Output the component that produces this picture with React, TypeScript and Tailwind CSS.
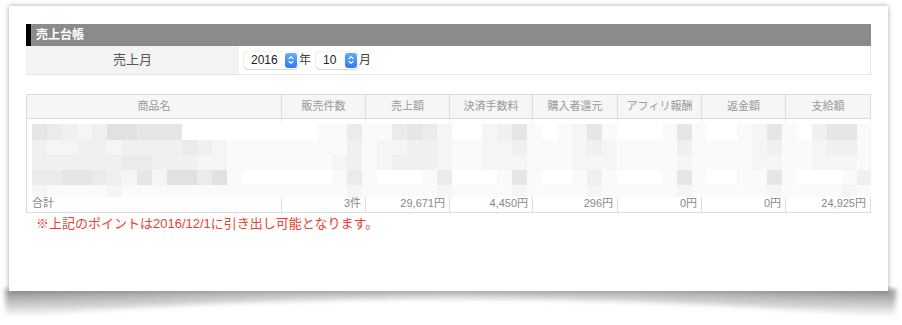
import React from "react";

const SHADES = ["#ffffff", "#fafafa", "#f5f5f5", "#f0f0f0", "#ebebeb", "#e6e6e6", "#e1e1e1"];

const MOSAIC = [
  "5432366555" + "0000000" + "0011" + "4" + "1" + "14542" + "002351" + "012510" + "00151" + "001251" + "03551",
  "3223323333432" + "1111" + "1111" + "3" + "1" + "22332" + "112231" + "112321" + "11131" + "111231" + "12331",
  "3333334433322" + "1111" + "1112" + "3" + "1" + "23332" + "112221" + "112221" + "11121" + "111221" + "12221",
  "4455432526646" + "1000" + "0001" + "4" + "1" + "00014" + "000151" + "001310" + "00151" + "001151" + "00013",
  "2111121111111" + "1111" + "1111" + "2" + "1" + "11112" + "111121" + "111211" + "11121" + "111121" + "11121",
];
const ROW_H = [16, 15, 15, 15, 12];

const COLS = [
  { name: "商品名", w: 255 },
  { name: "販売件数", w: 84 },
  { name: "売上額", w: 84 },
  { name: "決済手数料", w: 83 },
  { name: "購入者還元", w: 85 },
  { name: "アフィリ報酬", w: 84 },
  { name: "返金額", w: 84 },
  { name: "支給額", w: 85 },
];
const TOTALS = ["合計", "3件", "29,671円", "4,450円", "296円", "0円", "0円", "24,925円"];

function Stepper() {
  return (
    <div className="flex h-[15px] w-[12px] items-center justify-center rounded-[3px] bg-gradient-to-b from-[#62acfb] to-[#2d7cf0]">
      <svg width="6" height="10" viewBox="0 0 6 10" fill="none" stroke="white" strokeWidth="1.2" strokeLinecap="round" strokeLinejoin="round">
        <path d="M1 3.6 L3 1.6 L5 3.6" />
        <path d="M1 6.4 L3 8.4 L5 6.4" />
      </svg>
    </div>
  );
}

function Select({ value, w, textW }: { value: string; w: string; textW: string }) {
  return (
    <div className={`flex h-[17px] ${w} items-center justify-between rounded-[4px] bg-white pl-[7px] pr-[1px] shadow-[0_0_1px_rgba(0,0,0,0.45),0_1px_1px_rgba(0,0,0,0.12)]`}>
      <span className={`${textW} text-[12px] leading-none text-[#222]`}>{value}</span>
      <Stepper />
    </div>
  );
}

export default function App() {
  return (
    <div className="relative h-[325px] w-[902px] overflow-hidden bg-white font-['Liberation_Sans','Noto_Sans_CJK_JP',sans-serif]">
      {/* page curl shadow below the card */}
      <svg className="absolute left-0 top-[286px]" width="902" height="39" viewBox="0 0 902 39">
        <defs>
          <linearGradient id="curl" x1="0" y1="0" x2="0" y2="1">
            <stop offset="0" stopColor="#8c8c8c" />
            <stop offset="0.45" stopColor="#bdbdbd" />
            <stop offset="1" stopColor="#ffffff" />
          </linearGradient>
          <linearGradient id="mid" x1="0" y1="0" x2="1" y2="0">
            <stop offset="0" stopColor="#ffffff" stopOpacity="0" />
            <stop offset="0.3" stopColor="#ffffff" stopOpacity="0.35" />
            <stop offset="0.5" stopColor="#ffffff" stopOpacity="0.45" />
            <stop offset="0.7" stopColor="#ffffff" stopOpacity="0.35" />
            <stop offset="1" stopColor="#ffffff" stopOpacity="0" />
          </linearGradient>
          <filter id="blur" x="-5%" y="-50%" width="110%" height="200%">
            <feGaussianBlur stdDeviation="2.5" />
          </filter>
        </defs>
        <path d="M5 3 L896 3 L895 31 Q450 -6 6 31 Z" fill="url(#curl)" filter="url(#blur)" />
        <rect x="0" y="0" width="902" height="39" fill="url(#mid)" />
      </svg>

      <div className="relative z-10 ml-[9px] mt-[6px] h-[285px] w-[879px] bg-white px-[17px] pt-[18px] shadow-[0_0_5px_rgba(0,0,0,0.35)]">
        {/* title bar */}
        <div className="flex h-[22px] items-center border-l-[5px] border-black bg-[#8b8b8b] pl-[5px]">
          <span className="text-[12px] font-bold leading-none text-white">売上台帳</span>
        </div>

        {/* month row */}
        <div className="flex h-[29px] border-b border-r border-[#e6e6e6]">
          <div className="flex w-[213px] items-center justify-center bg-[#f3f3f3] text-[13px] text-[#555]">売上月</div>
          <div className="flex items-center pl-[5px] text-[12px] text-[#444]">
            <Select value="2016" w="w-[54px]" textW="w-[30px]" />
            <span className="ml-[1px] mr-[5px]">年</span>
            <Select value="10" w="w-[42px]" textW="w-[20px]" />
            <span className="ml-[1px]">月</span>
          </div>
        </div>

        {/* table */}
        <div className="mt-[19px] w-[845px] border-l border-t border-[#dcdcdc]">
          <div className="flex h-[24px] border-b border-[#dcdcdc] bg-[#f6f6f6]">
            {COLS.map((c) => (
              <div
                key={c.name}
                style={{ width: c.w }}
                className="flex items-center justify-center border-r border-[#dcdcdc] text-[11px] text-[#999]"
              >
                {c.name}
              </div>
            ))}
          </div>

          <div className="grid h-[78px]">
            <div className="col-start-1 row-start-1 flex">
              {COLS.map((c) => (
                <div key={c.name} style={{ width: c.w }} className="h-full border-r border-[#f0f0f0]" />
              ))}
            </div>
            <div className="col-start-1 row-start-1 overflow-hidden pl-[5px] pt-[5px]">
              {MOSAIC.map((row, ri) => (
                <div key={ri} className="flex" style={{ height: ROW_H[ri] }}>
                  {row.split("").map((ch, ci) => (
                    <div key={ci} className="h-full w-[15px] shrink-0" style={{ backgroundColor: SHADES[Number(ch)] }} />
                  ))}
                </div>
              ))}
            </div>
          </div>

          <div className="flex h-[16px] border-b border-[#dcdcdc]">
            {TOTALS.map((t, i) => (
              <div
                key={i}
                style={{ width: COLS[i].w }}
                className={`flex items-end overflow-hidden border-r border-[#dcdcdc] pb-[3px] text-[11px] leading-[11px] text-[#888] ${
                  i === 0 ? "justify-start pl-[5px]" : "justify-end pr-[4px]"
                }`}
              >
                {t}
              </div>
            ))}
          </div>
        </div>

        <p className="ml-[10px] mt-[2px] text-[13px] leading-[17px] text-[#e9432e]">
          ※上記のポイントは2016/12/1に引き出し可能となります。
        </p>
      </div>
    </div>
  );
}
